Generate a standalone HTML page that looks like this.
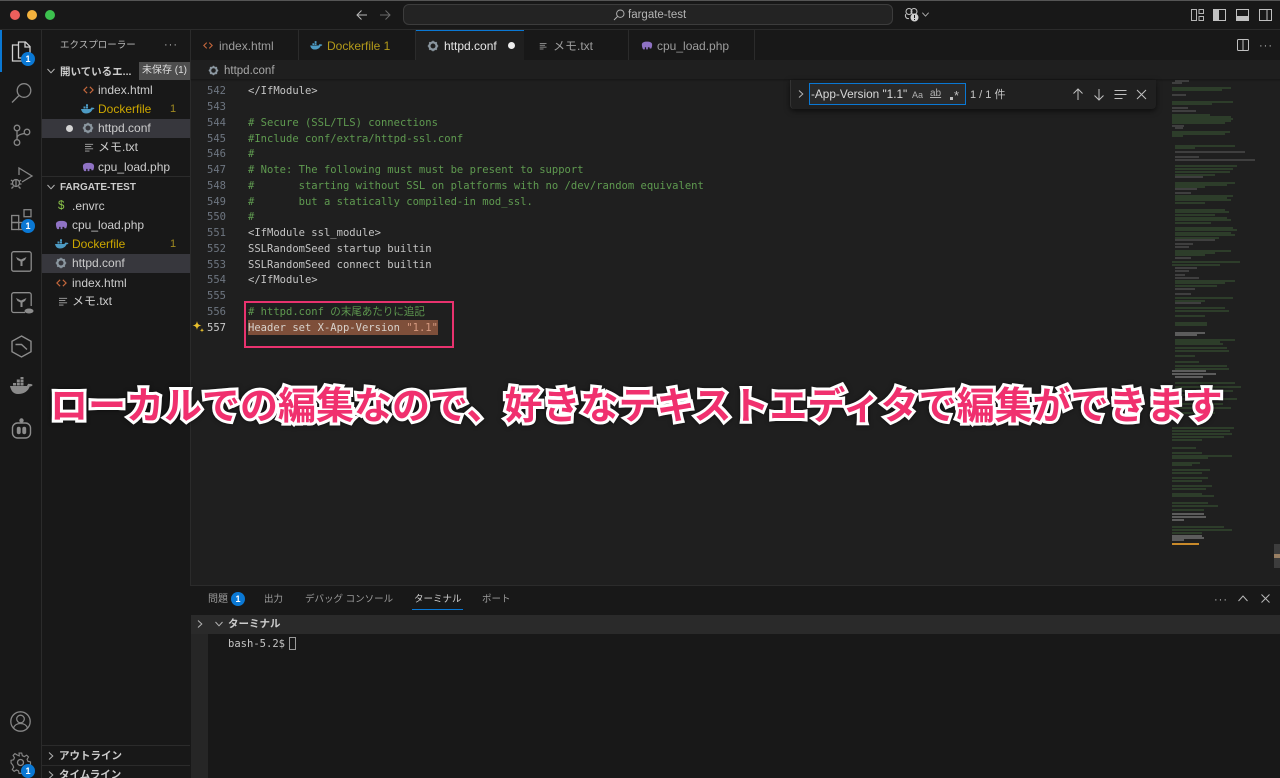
<!DOCTYPE html>
<html lang="ja"><head><meta charset="utf-8"><title>fargate-test</title>
<style>
html,body{margin:0;padding:0;background:#1f1f1f}
#r{position:relative;width:1280px;height:778px;overflow:hidden;background:#1f1f1f;font-family:"Liberation Sans","Noto Sans CJK JP",sans-serif;color:#ccc;filter:blur(.35px)}
.b{position:absolute}
.t{position:absolute;white-space:nowrap;line-height:16px;font-size:12px}
.c{position:absolute;left:248px;margin-top:1px;white-space:pre;font:10.52px/16px "DejaVu Sans Mono","Noto Sans CJK JP",monospace;color:#c4c4c4}
.g{color:#5f9a50}
.n{position:absolute;left:190px;margin-top:1px;width:36px;text-align:right;font:10.52px/16px "DejaVu Sans Mono",monospace;color:#6e7681}
.s{font-size:10.5px;font-weight:700;color:#ccc}
.y{color:#cca700}
.badge{position:absolute;width:14px;height:14px;border-radius:50%;background:#0a78d4;color:#fff;font-size:9px;font-weight:700;line-height:14px;text-align:center}
svg{position:absolute;overflow:visible}
</style></head><body><div id="r">

<svg width="0" height="0" style="position:absolute"><defs>
<symbol id="gear" viewBox="0 0 12 12" overflow="visible"><circle cx="6" cy="6" r="3.6" fill="none" stroke="#8b97a0" stroke-width="2.2"/><path d="M6 .8v2M6 9.2v2M.8 6h2M9.2 6h2M2.3 2.3l1.4 1.4M8.3 8.3l1.4 1.4M2.3 9.7l1.4-1.4M8.3 3.7l1.4-1.4" stroke="#8b97a0" stroke-width="1.4"/></symbol>
<symbol id="whale" viewBox="0 0 14 10" overflow="visible"><path d="M0 5h9.500c.3-1.200 1.200-1.800 1.500-1.300.8-.3 1.800 0 2.500.7-.5.8-1.400 1-2 1C10.500 8 8 9.500 5 9.500 2 9.500.5 7.500 0 5z" fill="#4d9bc4"/><path d="M2.500 2.500h2v2h-2zM5 2.500h2v2H5zM5 .2h2v2H5z" fill="#4d9bc4"/></symbol>
<symbol id="ele" viewBox="0 0 14 10" overflow="visible"><path d="M1 4C1 1.500 3.500.5 7 .5s6 1 6 3.500c0 1.500-.3 3-1 4.500h-2V7H8v2.500H6V7H4.500v2.500h-2C1.500 8 1 6 1 4z" fill="#8f72c4"/></symbol>
<symbol id="html" viewBox="0 0 12 10" overflow="visible"><path d="M4.500 1.500 1 5l3.500 3.500M7.500 1.500 11 5 7.500 8.500" fill="none" stroke="#c4673c" stroke-width="1.3"/></symbol>
<symbol id="txt" viewBox="0 0 12 10" overflow="visible"><path d="M1 1.500h9M1 4h7M1 6.500h9M1 9h5" fill="none" stroke="#a8a8a8" stroke-width="1"/></symbol>
<symbol id="chev" viewBox="0 0 10 10" overflow="visible"><path d="M1.500 3 5 6.800 8.500 3" fill="none" stroke="#b4b4b4" stroke-width="1"/></symbol>
<symbol id="chevr" viewBox="0 0 10 10" overflow="visible"><path d="M3 1.500 6.800 5 3 8.500" fill="none" stroke="#b4b4b4" stroke-width="1"/></symbol>
</defs></svg>

<!-- title bar -->
<div class="b" style="left:0;top:0;width:1280px;height:30px;background:#181818;border-bottom:1px solid #2b2b2b;box-sizing:border-box"></div>
<div class="b" style="left:0;top:0;width:1280px;height:1px;background:#555"></div>
<div class="b" style="left:10px;top:10px;width:10px;height:10px;border-radius:50%;background:#ec5f5c"></div>
<div class="b" style="left:27px;top:10px;width:10px;height:10px;border-radius:50%;background:#f4b23d"></div>
<div class="b" style="left:45px;top:10px;width:10px;height:10px;border-radius:50%;background:#3cc14e"></div>
<svg style="left:356px;top:9px" width="12" height="12"><path d="M11 6H1M5.500 1.500 1 6l4.500 4.500" fill="none" stroke="#b8b8b8" stroke-width="1"/></svg>
<svg style="left:379px;top:9px" width="12" height="12"><path d="M1 6h10M6.500 1.500 11 6l-4.500 4.500" fill="none" stroke="#6a6a6a" stroke-width="1"/></svg>
<div class="b" style="left:403px;top:4px;width:490px;height:21px;background:#232323;border:1px solid #3c3c3c;border-radius:6px;box-sizing:border-box"></div>
<svg style="left:613px;top:9px" width="12" height="12"><circle cx="7.300" cy="4.700" r="3.700" fill="none" stroke="#b0b0b0"/><path d="M4.500 7.500 1 11" stroke="#b0b0b0"/></svg>
<div class="t" style="left:628px;top:7px;font-size:11.5px;color:#b4b4b4">fargate-test</div>
<svg style="left:904px;top:7px" width="16" height="16"><circle cx="5" cy="4.500" r="3" fill="none" stroke="#c4c4c4"/><circle cx="10" cy="4.500" r="3" fill="none" stroke="#c4c4c4"/><path d="M2 7c-1.500 2 0 5 3 4.500" fill="none" stroke="#c4c4c4"/><circle cx="10.500" cy="10.500" r="4" fill="#d0d0d0"/><path d="M10.500 8v3M10.500 12v1" stroke="#181818"/></svg>
<svg style="left:921px;top:10px" width="9" height="9"><use href="#chev" width="9" height="9"/></svg>
<svg style="left:1191px;top:9px" width="13" height="13" fill="none" stroke="#b4b4b4"><rect x=".5" y=".5" width="5" height="11"/><rect x="8" y=".5" width="4.500" height="4"/><rect x="8" y="7.500" width="4.500" height="4"/></svg>
<svg style="left:1213px;top:9px" width="13" height="13"><rect x=".5" y=".5" width="12" height="11" fill="none" stroke="#c0c0c0"/><rect x="1" y="1" width="5" height="10" fill="#c0c0c0"/></svg>
<svg style="left:1236px;top:9px" width="13" height="13"><rect x=".5" y=".5" width="12" height="11" fill="none" stroke="#c0c0c0"/><rect x="1" y="7" width="11" height="4" fill="#c0c0c0"/></svg>
<svg style="left:1259px;top:9px" width="13" height="13"><rect x=".5" y=".5" width="12" height="11" fill="none" stroke="#c0c0c0"/><path d="M8 1v10" stroke="#c0c0c0"/></svg>

<!-- activity bar -->
<div class="b" style="left:0;top:30px;width:42px;height:748px;background:#181818;border-right:1px solid #2b2b2b;box-sizing:border-box"></div>
<div class="b" style="left:0;top:30px;width:2px;height:42px;background:#0a78d4"></div>
<svg style="left:11px;top:41px" width="22" height="22" fill="none" stroke="#d0d0d0" stroke-width="1.300"><path d="M7.500 4H1.500v16h12v-3"/><path d="M7.500 1h7l4.500 4.500V17h-11.500z"/><path d="M14 1v5h5"/></svg>
<div class="badge" style="left:21px;top:52px">1</div>
<svg style="left:11px;top:82px" width="22" height="22" fill="none" stroke="#868686" stroke-width="1.300"><circle cx="13" cy="8.500" r="6.800"/><path d="M8 13.500 1 20.500"/></svg>
<svg style="left:12px;top:124px" width="20" height="23" fill="none" stroke="#868686" stroke-width="1.300"><circle cx="5" cy="4" r="2.800"/><circle cx="5" cy="18.500" r="2.800"/><circle cx="15" cy="8" r="2.800"/><path d="M5 7v8.700M5 14.500c0-3 2-4 7.500-5"/></svg>
<svg style="left:10px;top:166px" width="24" height="24" fill="none" stroke="#868686" stroke-width="1.300"><path d="M9 9V2l13 8-10 6"/><circle cx="6" cy="17" r="3.500"/><path d="M1 14l2 1.500M11 14l-2 1.500M.5 18h2M9.500 18h2M1.500 22.500l2-2M10.500 22.500l-2-2M6 13.500V21"/></svg>
<svg style="left:11px;top:209px" width="22" height="22" fill="none" stroke="#868686" stroke-width="1.300"><rect x=".7" y="6.500" width="7" height="7"/><rect x=".7" y="13.500" width="7" height="7"/><rect x="7.700" y="13.500" width="7" height="7"/><rect x="13" y=".7" width="7" height="7"/></svg>
<div class="badge" style="left:21px;top:219px">1</div>
<svg style="left:11px;top:251px" width="21" height="21" fill="none" stroke="#8c8c8c" stroke-width="1.300"><rect x=".7" y=".7" width="19.500" height="19.500" rx="2"/><path d="M5 6l5 2.500L15.500 6 14 9l-2.500 1.500V15h-2v-4.500L6.500 9z" fill="#8c8c8c" stroke="none"/></svg>
<svg style="left:11px;top:292px" width="23" height="23" fill="none" stroke="#8c8c8c" stroke-width="1.300"><path d="M14 20.500H2.700a2 2 0 0 1-2-2V2.700a2 2 0 0 1 2-2h15.500a2 2 0 0 1 2 2V14"/><path d="M5 6l5 2.500L15.500 6 14 9l-2.500 1.500V15h-2v-4.500L6.500 9z" fill="#8c8c8c" stroke="none"/><ellipse cx="18" cy="19" rx="4.500" ry="2.500" fill="#8c8c8c" stroke="none"/></svg>
<svg style="left:11px;top:335px" width="21" height="23" fill="none" stroke="#8c8c8c" stroke-width="1.400"><path d="M10.500 1 20 6.300v10.400L10.500 22 1 16.700V6.300z"/><path d="M4.500 9.500h6l5.500 5"/></svg>
<svg style="left:10px;top:378px" width="23" height="17"><path d="M0 8h17c.5-2 1.800-2.800 2.200-2 1-.4 2.500 0 3.500 1-.7 1.300-2 1.500-3 1.500C18.200 13 14 16 8 16 3 16 1 12.500 0 8z" fill="#8a8a8a"/><path d="M3 5h3v2.500H3zM6.800 5h3v2.500h-3zM10.500 5h3v2.500h-3zM6.800 1.500h3v3h-3zM10.500 1.500h3v3h-3zM10.500-1h3v2h-3z" fill="#8a8a8a"/></svg>
<svg style="left:11px;top:418px" width="21" height="23" fill="none" stroke="#8c8c8c" stroke-width="1.400"><circle cx="10.500" cy="2.500" r="1.500" fill="#8c8c8c"/><path d="M6.500 5h8a5 5 0 0 1 5 5v5a5 5 0 0 1-5 5h-8a5 5 0 0 1-5-5v-5a5 5 0 0 1 5-5z"/><rect x="6.500" y="9.500" width="2.500" height="6" rx="1.200" fill="#8c8c8c"/><rect x="12" y="9.500" width="2.500" height="6" rx="1.200" fill="#8c8c8c"/></svg>
<svg style="left:10px;top:711px" width="21" height="21" fill="none" stroke="#868686" stroke-width="1.300"><circle cx="10.500" cy="10.500" r="9.700"/><circle cx="10.500" cy="8" r="3.800"/><path d="M3.500 17c1-3 4-4.500 7-4.500s6 1.500 7 4.500"/></svg>
<svg style="left:10px;top:752px" width="22" height="22" fill="none" stroke="#868686" stroke-width="1.300"><circle cx="10.500" cy="10.500" r="3"/><path d="M9 .7h3l.7 3 2.300 1 2.600-1.600 2.100 2.100-1.600 2.600 1 2.300 2.900.7v3l-2.900.7-1 2.300 1.600 2.600-2.100 2.100-2.600-1.600-2.300 1-.7 2.900H9l-.7-2.900-2.300-1-2.600 1.600-2.100-2.100 1.600-2.600-1-2.300L-.1 12V9l2.900-.7 1-2.300L2.200 3.400l2.100-2.100L6.900 2.900 9.200 3.900z" transform="scale(.88) translate(1.300 .5)"/></svg>
<div class="badge" style="left:21px;top:764px">1</div>

<!-- sidebar -->
<div class="b" style="left:42px;top:30px;width:148px;height:748px;background:#181818"></div>
<div class="t" style="left:60px;top:38px;font-size:9.5px;color:#b8b8b8">エクスプローラー</div>
<div class="t" style="left:164px;top:37px;font-size:11px;color:#b8b8b8;letter-spacing:1px">···</div>
<svg style="left:46px;top:66px" width="10" height="10"><use href="#chev" width="10" height="10"/></svg>
<div class="t s" style="left:60px;top:64px">開いているエ...</div>
<div class="b" style="left:139px;top:62px;width:51px;height:18px;background:#4d4d4d;color:#ddd;font-size:10px;line-height:18px;text-align:center">未保存 (1)</div>

<svg style="left:83px;top:85px" width="11" height="10"><use href="#html" width="11" height="10"/></svg>
<div class="t" style="left:98px;top:82px">index.html</div>
<svg style="left:81px;top:104px" width="14" height="10"><use href="#whale" width="14" height="10"/></svg>
<div class="t y" style="left:98px;top:101px">Dockerfile</div>
<div class="t y" style="left:170px;top:101px;font-size:11px;color:#a08a20">1</div>
<div class="b" style="left:42px;top:119px;width:148px;height:19px;background:#37373d"></div>
<div class="b" style="left:66px;top:125px;width:7px;height:7px;border-radius:50%;background:#d4d4d4"></div>
<svg style="left:82px;top:122px" width="12" height="12"><use href="#gear" width="12" height="12"/></svg>
<div class="t" style="left:98px;top:120px">httpd.conf</div>
<svg style="left:84px;top:143px" width="11" height="9"><use href="#txt" width="11" height="9"/></svg>
<div class="t" style="left:98px;top:139px">メモ.txt</div>
<svg style="left:82px;top:162px" width="13" height="10"><use href="#ele" width="13" height="10"/></svg>
<div class="t" style="left:98px;top:159px">cpu_load.php</div>

<div class="b" style="left:42px;top:176px;width:148px;height:1px;background:#2b2b2b"></div>
<svg style="left:46px;top:182px" width="10" height="10"><use href="#chev" width="10" height="10"/></svg>
<div class="t s" style="left:60px;top:180px;font-size:10px">FARGATE-TEST</div>
<div class="t" style="left:58px;top:198px;color:#8bc34a;font-size:11.5px">$</div>
<div class="t" style="left:72px;top:198px">.envrc</div>
<svg style="left:55px;top:220px" width="13" height="10"><use href="#ele" width="13" height="10"/></svg>
<div class="t" style="left:72px;top:217px">cpu_load.php</div>
<svg style="left:55px;top:239px" width="14" height="10"><use href="#whale" width="14" height="10"/></svg>
<div class="t y" style="left:72px;top:236px">Dockerfile</div>
<div class="t y" style="left:170px;top:236px;font-size:11px;color:#a08a20">1</div>
<div class="b" style="left:42px;top:254px;width:148px;height:19px;background:#37373d"></div>
<svg style="left:55px;top:257px" width="12" height="12"><use href="#gear" width="12" height="12"/></svg>
<div class="t" style="left:72px;top:255px">httpd.conf</div>
<svg style="left:56px;top:278px" width="11" height="10"><use href="#html" width="11" height="10"/></svg>
<div class="t" style="left:72px;top:275px">index.html</div>
<svg style="left:58px;top:297px" width="11" height="9"><use href="#txt" width="11" height="9"/></svg>
<div class="t" style="left:72px;top:293px">メモ.txt</div>

<div class="b" style="left:42px;top:745px;width:148px;height:1px;background:#2b2b2b"></div>
<div class="b" style="left:42px;top:765px;width:148px;height:1px;background:#2b2b2b"></div>
<svg style="left:46px;top:751px" width="10" height="10"><use href="#chevr" width="10" height="10"/></svg>
<div class="t s" style="left:59px;top:748px">アウトライン</div>
<svg style="left:46px;top:770px" width="10" height="10"><use href="#chevr" width="10" height="10"/></svg>
<div class="t s" style="left:59px;top:767px">タイムライン</div>

<!-- tabs -->
<div class="b" style="left:190px;top:30px;width:1090px;height:30px;background:#181818"></div>
<div class="b" style="left:190px;top:30px;width:1px;height:748px;background:#2b2b2b"></div>
<div class="b" style="left:298px;top:30px;width:1px;height:30px;background:#2b2b2b"></div>
<div class="b" style="left:415px;top:30px;width:1px;height:30px;background:#2b2b2b"></div>
<div class="b" style="left:628px;top:30px;width:1px;height:30px;background:#2b2b2b"></div>
<div class="b" style="left:754px;top:30px;width:1px;height:30px;background:#2b2b2b"></div>
<div class="b" style="left:416px;top:30px;width:108px;height:30px;background:#1f1f1f;border-top:1px solid #0a78d4;box-sizing:border-box"></div>
<svg style="left:203px;top:41px" width="10" height="9"><use href="#html" width="10" height="9"/></svg>
<div class="t" style="left:219px;top:38px;color:#9d9d9d">index.html</div>
<svg style="left:310px;top:41px" width="13" height="9"><use href="#whale" width="13" height="9"/></svg>
<div class="t y" style="left:327px;top:38px;color:#b39a1a">Dockerfile 1</div>
<svg style="left:427px;top:40px" width="12" height="12"><use href="#gear" width="12" height="12"/></svg>
<div class="t" style="left:444px;top:38px;color:#e6e6e6">httpd.conf</div>
<div class="b" style="left:508px;top:42px;width:7px;height:7px;border-radius:50%;background:#eee"></div>
<svg style="left:539px;top:42px" width="9" height="8"><use href="#txt" width="9" height="8"/></svg>
<div class="t" style="left:553px;top:38px;color:#9d9d9d">メモ.txt</div>
<svg style="left:641px;top:41px" width="12" height="9"><use href="#ele" width="12" height="9"/></svg>
<div class="t" style="left:657px;top:38px;color:#9d9d9d">cpu_load.php</div>
<svg style="left:1237px;top:39px" width="12" height="12"><rect x=".5" y=".5" width="11" height="11" rx="1" fill="none" stroke="#c0c0c0"/><path d="M6 1v10" stroke="#c0c0c0"/></svg>
<div class="t" style="left:1259px;top:38px;font-size:11px;color:#b8b8b8;letter-spacing:1px">···</div>

<!-- breadcrumb -->
<svg style="left:208px;top:65px" width="11" height="11"><use href="#gear" width="11" height="11"/></svg>
<div class="t" style="left:224px;top:63px;font-size:11.5px;color:#a8a8a8">httpd.conf</div>
<div class="b" style="left:191px;top:79px;width:1089px;height:3px;background:linear-gradient(#161616,#1f1f1f)"></div>

<!-- code -->
<div class="n" style="top:82px">542</div><div class="c" style="top:82px">&lt;/IfModule&gt;</div>
<div class="n" style="top:98px">543</div>
<div class="n" style="top:114px">544</div><div class="c g" style="top:114px"># Secure (SSL/TLS) connections</div>
<div class="n" style="top:130px">545</div><div class="c g" style="top:130px">#Include conf/extra/httpd-ssl.conf</div>
<div class="n" style="top:145px">546</div><div class="c g" style="top:145px">#</div>
<div class="n" style="top:161px">547</div><div class="c g" style="top:161px"># Note: The following must must be present to support</div>
<div class="n" style="top:177px">548</div><div class="c g" style="top:177px">#       starting without SSL on platforms with no /dev/random equivalent</div>
<div class="n" style="top:193px">549</div><div class="c g" style="top:193px">#       but a statically compiled-in mod_ssl.</div>
<div class="n" style="top:208px">550</div><div class="c g" style="top:208px">#</div>
<div class="n" style="top:224px">551</div><div class="c" style="top:224px">&lt;IfModule ssl_module&gt;</div>
<div class="n" style="top:240px">552</div><div class="c" style="top:240px">SSLRandomSeed startup builtin</div>
<div class="n" style="top:256px">553</div><div class="c" style="top:256px">SSLRandomSeed connect builtin</div>
<div class="n" style="top:271px">554</div><div class="c" style="top:271px">&lt;/IfModule&gt;</div>
<div class="n" style="top:287px">555</div>
<div class="n" style="top:303px">556</div><div class="c g" style="top:303px"># httpd.conf の末尾あたりに追記</div>
<div class="b" style="left:248px;top:320px;width:190px;height:15px;background:#7e4f3a"></div>
<div class="n" style="top:319px;color:#ccc">557</div><div class="c" style="top:319px;color:#d8d2cc">Header set X-App-Version <span style="color:#d59a80">"1.1"</span></div>
<svg style="left:192px;top:321px" width="14" height="13"><path d="M5 0c.5 3 1.500 4 4.500 4.500C6.500 5 5.500 6 5 9 4.500 6 3.500 5 .5 4.500 3.500 4 4.500 3 5 0z" fill="#e8c02c"/><path d="M10 7c.2 1.500.8 2 2.300 2.300C10.800 9.500 10.200 10 10 11.500 9.800 10 9.200 9.500 7.700 9.300 9.200 9 9.800 8.500 10 7z" fill="#e8c02c"/></svg>
<div class="b" style="left:244px;top:301px;width:210px;height:47px;border:2px solid #e8326e;box-sizing:border-box"></div>

<!-- minimap -->
<svg style="left:1165px;top:78px" width="115" height="470">
<g fill="none" stroke-width=".8">
<path stroke="#46703c" d="M7 10h59M7 12h50M7 24h61M7 26h40M7 37h38M7 39h59M7 41h61M7 43h59M7 45h53M7 54h58M7 56h53M7 58h11M10 68h60M10 70h20M10 88h62M10 91h58M10 94h55M10 97h40M10 105h60M10 107h52M10 109h30M10 118h58M10 120h52M10 122h56M10 125h30M10 132h50M10 134h54M10 137h40M10 140h52M10 142h56M10 145h36M10 150h58M10 152h62M10 155h56M10 157h60M10 160h44M10 173h56M10 175h40M10 177h30M7 184h68M7 187h48M10 203h60M10 205h50M10 208h42M10 220h58M10 223h30M10 230h50M10 233h54M10 238h30M10 245h32M10 247h32M10 262h60M10 264h45M10 266h48M10 270h52M10 273h54M10 278h20M10 284h24M10 288h52M10 291h54M10 305h60M10 309h66M10 313h58M10 317h46M10 321h62M10 326h48M10 330h56M10 335h40M7 350h62M7 353h58M7 356h60M7 359h52M7 362h30M7 370h24M7 375h30M7 378h60M7 380h36M7 385h28M7 387h20M7 392h38M7 395h30M7 400h36M7 403h30M7 408h40M7 411h34M7 416h30M7 418h42M7 425h36M7 428h46M7 432h32M7 449h52M7 452h60M7 455h30"/>
<path stroke="#767676" d="M10 3h14M7 5h10M7 17h14M7 30h16M7 33h24M7 48h12M10 50h8M10 74h70M10 79h24M10 82h80M10 99h28M10 111h22M10 115h16M10 162h40M10 166h18M10 169h14M10 180h16M10 190h22M10 193h14M10 197h10M10 200h24M10 211h20M10 216h16M10 225h26"/>
<path stroke="#c4c4c4" d="M10 255h30M10 257h22M7 293h34M7 296h44M10 299h28M7 436h32M7 439h34M7 442h12M7 458h30M7 460h32M7 462h12"/>
</g>
</svg>
<div class="b" style="left:1172px;top:543px;width:27px;height:2px;background:#c98a2a"></div>
<div class="b" style="left:1274px;top:544px;width:6px;height:24px;background:#3d3d3d"></div>
<div class="b" style="left:1274px;top:554px;width:6px;height:4px;background:#9a8064"></div>

<!-- find widget -->
<div class="b" style="left:790px;top:80px;width:366px;height:29px;background:#202020;border-left:1px solid #333;border-radius:0 0 4px 4px;box-shadow:0 2px 6px #0009;box-sizing:border-box"></div>
<svg style="left:796px;top:89px" width="10" height="10"><use href="#chevr" width="10" height="10"/></svg>
<div class="b" style="left:809px;top:83px;width:157px;height:22px;background:#2a2a2a;border:1px solid #0a78d4;box-sizing:border-box"></div>
<div class="t" style="left:811px;top:86px;font-size:11.8px;color:#d8d8d8">-App-Version "1.1"</div>
<div class="t" style="left:912px;top:87px;font-size:9px;color:#b0b0b0">Aa</div>
<div class="t" style="left:930px;top:86px;font-size:10px;color:#b0b0b0;text-decoration:underline">ab</div>
<div class="b" style="left:950px;top:97px;width:3px;height:3px;background:#c0c0c0"></div>
<div class="t" style="left:954px;top:88px;font-size:13px;color:#c0c0c0">*</div>
<div class="t" style="left:970px;top:87px;font-size:11px;color:#c4c4c4">1 / 1 件</div>
<svg style="left:1072px;top:88px" width="12" height="13" fill="none" stroke="#c0c0c0"><path d="M6 12V1M1.500 5.500 6 1l4.500 4.500"/></svg>
<svg style="left:1093px;top:88px" width="12" height="13" fill="none" stroke="#c0c0c0"><path d="M6 1v11M1.500 7.500 6 12l4.500-4.500"/></svg>
<svg style="left:1114px;top:89px" width="13" height="11" fill="none" stroke="#c0c0c0"><path d="M.5 1.500h12M.5 5.500h12M.5 9.500h8"/></svg>
<svg style="left:1136px;top:89px" width="11" height="11" fill="none" stroke="#c0c0c0"><path d="M1 1l9 9M10 1l-9 9"/></svg>

<!-- panel -->
<div class="b" style="left:190px;top:585px;width:1090px;height:193px;background:#181818;border-top:1px solid #2b2b2b;box-sizing:border-box"></div>
<div class="t" style="left:208px;top:592px;font-size:10px;color:#9d9d9d">問題</div>
<div class="badge" style="left:231px;top:592px">1</div>
<div class="t" style="left:264px;top:592px;font-size:9.5px;color:#9d9d9d">出力</div>
<div class="t" style="left:305px;top:592px;font-size:9.5px;color:#9d9d9d">デバッグ コンソール</div>
<div class="t" style="left:414px;top:592px;font-size:9.5px;color:#d0d0d0">ターミナル</div>
<div class="b" style="left:412px;top:609px;width:51px;height:1px;background:#0a78d4"></div>
<div class="t" style="left:482px;top:592px;font-size:9.5px;color:#9d9d9d">ポート</div>
<div class="t" style="left:1214px;top:592px;font-size:11px;color:#b8b8b8;letter-spacing:1px">···</div>
<svg style="left:1237px;top:594px" width="12" height="9" fill="none" stroke="#b8b8b8"><path d="M1.500 7 6 2l4.500 5"/></svg>
<svg style="left:1260px;top:593px" width="11" height="11" fill="none" stroke="#b8b8b8"><path d="M1.500 1.500l8 8M9.500 1.500l-8 8"/></svg>
<div class="b" style="left:191px;top:615px;width:1089px;height:19px;background:#2a2a2a"></div>
<div class="b" style="left:191px;top:634px;width:17px;height:144px;background:#262626"></div>
<svg style="left:195px;top:619px" width="10" height="10"><use href="#chevr" width="10" height="10"/></svg>
<svg style="left:214px;top:619px" width="10" height="10"><use href="#chev" width="10" height="10"/></svg>
<div class="t s" style="left:228px;top:616px">ターミナル</div>
<div class="b" style="left:228px;top:636px;font:10.52px/16px 'DejaVu Sans Mono',monospace;color:#c4c4c4;white-space:pre">bash-5.2$</div>
<div class="b" style="left:289px;top:637px;width:7px;height:13px;border:1px solid #9a9a9a;box-sizing:border-box"></div>

<!-- overlay caption -->
<div style="position:absolute;left:50px;top:379px;white-space:nowrap;font:700 38px/48px 'Noto Sans CJK JP','Liberation Sans',sans-serif;color:#f0306e;-webkit-text-stroke:6px #fff;paint-order:stroke fill;filter:drop-shadow(0 0 2px #0008)">ローカルでの編集なので、好きなテキストエディタで編集ができます</div>

</div></body></html>
